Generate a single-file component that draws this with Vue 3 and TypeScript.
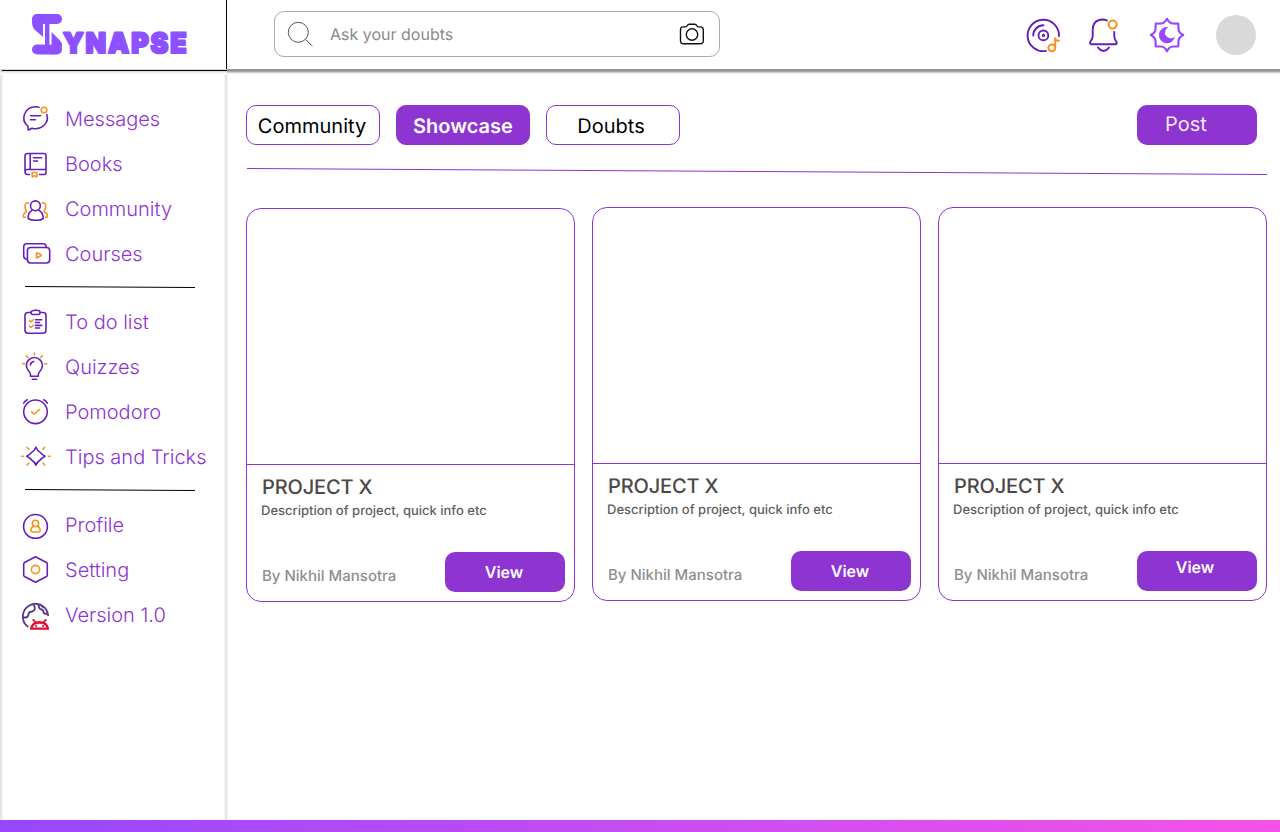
<script setup lang="ts">
interface NavItem {
  label: string
  icon: string
}

const groups: NavItem[][] = [
  [
    { label: 'Messages', icon: 'messages' },
    { label: 'Books', icon: 'books' },
    { label: 'Community', icon: 'community' },
    { label: 'Courses', icon: 'courses' },
  ],
  [
    { label: 'To do list', icon: 'todo' },
    { label: 'Quizzes', icon: 'quizzes' },
    { label: 'Pomodoro', icon: 'pomodoro' },
    { label: 'Tips and Tricks', icon: 'tips' },
  ],
  [
    { label: 'Profile', icon: 'profile' },
    { label: 'Setting', icon: 'setting' },
    { label: 'Version 1.0', icon: 'version' },
  ],
]

const tabs = ['Community', 'Showcase', 'Doubts']
const activeTab = 'Showcase'

const projects = [1, 2, 3].map((id) => ({
  id,
  title: 'PROJECT X',
  description: 'Description of project, quick info etc',
  author: 'By Nikhil Mansotra',
}))
</script>

<template>
  <div class="page">
    <header class="header">
      <div class="brand">
        <svg class="logo" width="190" height="56" viewBox="0 0 190 56">
          <g fill="#8c52ff">
            <rect x="2" y="4" width="30" height="10" rx="5" />
            <path d="M8 4H13V27L4.500 19.500Q2 17 2 12Q2 4 8 4Z" />
            <rect x="2" y="34.500" width="30" height="10" rx="5" />
            <path d="M21.500 22 29.500 30Q32 32 32 36Q31 44.500 23 44.500H21.500Z" />
            <rect x="15" y="13" width="4.500" height="23" />
          </g>
          <path d="M14 14V34.500M20.500 14V34.500" stroke="#fff" stroke-width="1.300" />
          <text class="wordmark" x="33" y="43.300" textLength="125.500" lengthAdjust="spacingAndGlyphs">YNAPSE</text>
        </svg>
      </div>
      <div class="search">
        <svg class="lens" width="28" height="28" viewBox="0 0 28 28" fill="none" stroke="#555" stroke-width="1">
          <circle cx="12.300" cy="12.300" r="10" /><path d="M19.500 19.500 26.500 26.200" />
        </svg>
        <span class="hint">Ask your doubts</span>
        <svg class="camera" width="26" height="24" viewBox="0 0 26 24" fill="none" stroke="#111" stroke-width="1.400">
          <path d="M4 4.900H6.500Q7.600 4.900 8.300 3.500Q9 2.200 10.200 2.200H15.800Q17 2.200 17.700 3.500Q18.400 4.900 19.500 4.900H21.500Q24.300 4.900 24.300 8V18.500Q24.300 21.800 21 21.800H4.500Q1.500 21.800 1.500 18.500V8Q1.500 4.900 4 4.900Z" />
          <circle cx="13" cy="12.500" r="5.700" />
        </svg>
      </div>
      <div class="actions">
        <svg class="action disc" viewBox="0 0 40 40">
          <g class="p">
            <path d="M35 21A15.700 15.700 0 1 0 22 35.900" /><circle cx="19.400" cy="20.400" r="4.900" />
            <path d="M9.200 20.500A10.300 10.300 0 0 1 19.500 10.300" /><circle cx="19.400" cy="20.400" r=".7" />
          </g>
          <g class="o"><circle cx="27.800" cy="32.800" r="3.400" /><path d="M31.200 32.800V23.300Q31.500 26 34.800 25.800" /></g>
        </svg>
        <svg class="action bell" viewBox="0 0 40 40">
          <g class="p">
            <path d="M23 5.500Q21 4.500 18.500 4.500Q8.700 5 8.700 15V21Q8.700 24 6.600 26.300Q5 29.300 8 29.300H31Q33.800 29.300 32.200 26.300Q30.300 24 30.300 21V17" />
            <path d="M14 32.500Q19.500 39.500 25 32.500" />
          </g>
          <circle class="o" cx="28.700" cy="9.600" r="4" />
        </svg>
        <svg class="action theme" viewBox="0 0 40 40">
          <path d="M20 3.800Q22.300 8.300 25.800 8.500Q28.500 8.600 31.300 8.700Q31.400 11.500 31.500 14.200Q31.700 17.700 36.200 20Q31.700 22.300 31.500 25.800Q31.400 28.500 31.300 31.300Q28.500 31.400 25.800 31.500Q22.300 31.700 20 36.200Q17.700 31.700 14.200 31.500Q11.500 31.400 8.700 31.300Q8.600 28.500 8.500 25.800Q8.300 22.300 3.800 20Q8.300 17.700 8.500 14.200Q8.600 11.500 8.700 8.700Q11.500 8.600 14.200 8.500Q17.700 8.300 20 3.800Z" fill="none" stroke="#9747ff" stroke-width="2.200" stroke-linejoin="round" />
          <path d="M21.500 12.200A8.100 8.100 0 1 0 28 21.500A5.800 5.800 0 1 1 21.500 12.200Z" fill="#9747ff" />
        </svg>
        <div class="avatar"></div>
      </div>
    </header>

    <div class="body">
      <nav class="sidebar">
        <template v-for="(group, g) in groups" :key="g">
          <svg v-if="g > 0" class="separator" width="172" height="23" viewBox="0 0 172 23">
            <line x1="1" y1="10.500" x2="171" y2="11.500" stroke="#000" />
          </svg>
          <a v-for="item in group" :key="item.label" class="nav-item">
            <svg class="nav-icon" width="32" height="30" viewBox="0 0 32 30">
              <template v-if="item.icon === 'messages'">
                <path class="p" d="M19 3.300Q17.500 2.800 15.500 2.800A11.800 11 0 0 0 7.800 22L8.300 26 12 24.200A11.800 11 0 0 0 26.800 10.500M10.500 11.700H20.500M10.500 15.700H15.300" />
                <circle class="o" cx="24" cy="6" r="2.800" />
              </template>
              <template v-else-if="item.icon === 'books'">
                <path class="p" d="M9.500 25.500H7.500Q5 25.500 5 22.500V7Q5 4.500 7.500 4.500H24Q26 4.500 26 6.500V23.500Q26 25.500 24 25.500H19.500M10.200 4.500V20.500M26 20.500H7Q5 20.500 5 22.500M13.500 8.700H21.500M13.500 12H17.500" />
                <path class="o" d="M12.200 23.500H16.800V28L14.500 26.800 12.200 28Z" />
              </template>
              <template v-else-if="item.icon === 'community'">
                <path class="o" d="M8.500 9C5.500 8 4.800 11 5 13C5.200 16 7 16.500 6.500 18C4.500 18.500 3.200 20.500 3.500 23.200H5.300M22.200 9C25.200 8 26 11 25.700 13C25.500 16 23.700 16.500 24.200 18C26.200 18.500 27.700 20.500 27.300 23.200H25.500" />
                <circle class="p" cx="15.400" cy="11.800" r="4.900" />
                <path class="p" d="M11.800 16.500Q8 18.500 8.200 24.500Q11.500 26.500 15.800 26.200Q20.500 26.500 23.200 24.500Q23.200 18.500 19 16.500" />
              </template>
              <template v-else-if="item.icon === 'courses'">
                <path class="p" d="M7.500 20.300Q3.700 20.300 3.700 16.500V7.800Q3.700 4.800 6.700 4.800H23Q26.200 4.800 26.200 8.400" />
                <rect class="p" x="7.400" y="8.500" width="22.300" height="15.500" rx="3.200" />
                <path class="o" d="M16.500 13.800V19L21 16.800Q21.200 15.700 20.500 15.300Z" />
              </template>
              <template v-else-if="item.icon === 'todo'">
                <path class="p" d="M11 5.500H8Q5 5.500 5 8.500V23Q5 26.200 8 26.200H23Q26 26.200 26 23V8.500Q26 5.500 23 5.500H20M14 3.500Q15.500 2.500 17 3.500H18.500Q20 3.500 20 5.500Q20 7.500 18 7.500H13Q11 7.500 11 5.500Q11 3.500 14 3.500ZM15.500 12.700H21.700M15.500 15.500H19.500M15.500 18.400H21.700M15.500 21H19.500" />
                <path class="o" d="M9.500 13.700 11 15 13.200 12.700M9.500 19.200 11 20.500 13.200 18.200" />
              </template>
              <template v-else-if="item.icon === 'quizzes'">
                <path class="p" d="M10.500 24.300V22.500Q10.300 20.500 8.300 18.500Q6.400 16.300 6.400 13.500A8 8 0 0 1 22.400 13.500Q22.400 16.300 20.500 18.500Q18.500 20.500 18.300 22.500V24.300ZM12.300 27.300H16.700M10.400 13Q10.700 10 13.700 9.500" />
                <path class="o" d="M14.400 1V2.800M6.300 3.700 8 5.400M22.500 3.700 20.800 5.400M2.500 11.800H4.800M24.500 11.800H26.800" />
              </template>
              <template v-else-if="item.icon === 'pomodoro'">
                <circle class="p" cx="15.500" cy="14.800" r="11.800" />
                <path class="p" d="M3.700 6.200Q5 4 7.200 2.800M27.300 6.200Q26 4 23.800 2.800" />
                <path class="o" d="M11.500 14.900 14.200 17 19.400 12.600" />
              </template>
              <template v-else-if="item.icon === 'tips'">
                <path class="p" d="M15.900 5.200C17 8 18.200 9.300 20.200 10.400Q21.500 12.200 25 14.200Q21.500 16.200 20.200 18C18.200 19.100 17 20.400 15.900 23.200C14.800 20.400 13.600 19.100 11.600 18Q10.300 16.200 6.800 14.200Q10.300 12.200 11.600 10.400C13.600 9.300 14.800 8 15.900 5.200Z" />
                <path class="o" d="M1.500 14.200H3.300M28.400 14.200H30.300M7 5.300 8.900 7.300M24.700 5.300 22.900 7.300M7 23 8.900 21M24.700 23 22.900 21" />
              </template>
              <template v-else-if="item.icon === 'profile'">
                <circle class="p" cx="15.500" cy="16.400" r="11.900" />
                <circle class="o" cx="15.500" cy="13.400" r="3.100" />
                <path class="o" d="M13.500 16Q10.800 17.500 10.900 21Q11 22 12.500 22H18.500Q20.200 22 20.200 21Q20.200 17.500 17.500 16" />
              </template>
              <template v-else-if="item.icon === 'setting'">
                <path class="p" d="M15.500 1.700 26.500 7.500Q27.300 8 27.300 9V20Q27.300 21 26.500 21.500L15.500 27.200 4.500 21.500Q3.700 21 3.700 20V9Q3.700 8 4.500 7.500Z" />
                <circle class="o" cx="15.500" cy="14.500" r="4.100" />
              </template>
              <template v-else>
                <path d="M8.200 27A12.700 12.700 0 1 1 28.200 16M3.400 17.500Q8.500 18 8.600 14Q8.700 11.800 12 11.500Q15.300 10.500 14.700 7L13.500 4M18.500 4Q18.500 9 21.500 9.500Q23.500 10 23.800 13Q25 14.300 28 13.500M20 4Q23 8 25.500 8" fill="none" stroke="#5b3a8c" stroke-width="1.900" />
                <path d="M9.800 29.700Q10.300 24.500 14.300 22.300L12 20 13.500 18.800 16 21.500Q19.500 20.700 23 21.500L25.500 18.800 27 20 24.900 22.300Q28.700 24.500 29.200 29.700Z" fill="#e0102f" />
                <path d="M12.600 27.600Q13.800 24 19.500 23.800Q25.200 24 26.400 27.600Z" fill="#fff" />
                <circle cx="16.200" cy="26" r="1.100" fill="#e0102f" /><circle cx="23" cy="26" r="1.100" fill="#e0102f" />
              </template>
            </svg>
            <span>{{ item.label }}</span>
          </a>
        </template>
      </nav>

      <main class="content">
        <div class="toolbar">
          <button v-for="tab in tabs" :key="tab" class="tab" :class="{ active: tab === activeTab }">{{ tab }}</button>
          <button class="post">Post</button>
        </div>
        <svg class="rule" width="1021" height="8" viewBox="0 0 1021 8">
          <line x1="1" y1="0.500" x2="1021" y2="6.500" stroke="#8d34d1" />
        </svg>
        <section class="cards">
          <article v-for="project in projects" :key="project.id" class="card">
            <div class="preview"></div>
            <div class="details">
              <h2>{{ project.title }}</h2>
              <p>{{ project.description }}</p>
              <div class="footer">
                <span class="author">{{ project.author }}</span>
                <button class="view">View</button>
              </div>
            </div>
          </article>
        </section>
      </main>
    </div>
    <div class="bottom-bar"></div>
  </div>
</template>

<style>
body {
  margin: 0;
}
</style>

<style scoped>
.page {
  width: 1280px;
  height: 832px;
  display: flex;
  flex-direction: column;
  overflow: hidden;
  background: #fff;
  font-family: Inter, 'Liberation Sans', sans-serif;
  text-rendering: geometricPrecision;
}
.page * {
  box-sizing: border-box;
}
button {
  font-family: inherit;
  text-rendering: inherit;
  padding: 0;
  border: 0;
  display: flex;
  align-items: center;
  justify-content: center;
}
.header {
  position: relative;
  height: 69px;
  flex: none;
  display: flex;
  box-shadow: 0 2px 0 #929292, 0 3px 0 #a8a8a8, 0 4px 0 #d0d0d0, 0 5px 0 #eee;
  background: #fff;
}
.brand {
  width: 227px;
  height: 71px;
  padding: 10px 0 0 30px;
  background: linear-gradient(#000, #000) 2px 70px / 225px 1px no-repeat, linear-gradient(#000, #000) 226px 0 / 1px 69px no-repeat, linear-gradient(#fff, #fff) 0 0 / 226px 69px no-repeat, #d9d5d9;
  box-shadow: 0 1px 0 #ddd, 0 2px 0 #eee, 0 4px 0 #fafafa;
}
.logo {
  display: block;
}
.wordmark {
  font-family: Inter, sans-serif;
  font-size: 28px;
  font-weight: 900;
  letter-spacing: 2px;
  fill: #8c52ff;
  stroke: #8c52ff;
  stroke-width: 2.2px;
  stroke-linejoin: round;
}
.search {
  width: 446px;
  height: 46px;
  margin: 11px 0 0 47px;
  padding: 0 14px 0 12px;
  border: 1px solid #aaa;
  border-radius: 10px;
  display: flex;
  align-items: center;
}
.lens {
  margin: 0 0 0 -1px;
}
.hint {
  flex: 1;
  margin-left: 16px;
  font-size: 16px;
  color: #8a8a8a;
}
.actions {
  margin-left: auto;
  padding: 15px 24px 0 0;
  display: flex;
}
.action {
  width: 40px;
  height: 40px;
}
.bell {
  margin-left: 20px;
}
.theme {
  margin-left: 23px;
}
.avatar {
  width: 40px;
  height: 40px;
  margin-left: 29px;
  border-radius: 50%;
  background: #d9d9d9;
}
.p,
.o {
  fill: none;
  stroke: #6420b5;
  stroke-width: 1.6;
  stroke-linecap: round;
  stroke-linejoin: round;
}
.o {
  stroke: #f7931e;
  stroke-width: 1.6;
}
.action .p {
  stroke-width: 1.9;
}
.action .o {
  stroke-width: 2;
}
.body {
  flex: 1;
  min-height: 0;
  display: flex;
}
.sidebar {
  width: 228px;
  padding: 27px 0 0 20px;
  background: linear-gradient(90deg, #e6e6e6 2px, #f5f5f5 2px 3px, transparent 3px 224px, #f5f5f5 224px 225px, #e6e6e6 225px 227px, #f3f3f3 227px);
}
.nav-item {
  height: 45px;
  display: flex;
  align-items: center;
  gap: 13px;
  font-size: 20px;
  font-weight: 350;
  color: #8d34d1;
  white-space: nowrap;
}
.nav-icon {
  flex: none;
}
.separator {
  display: block;
  margin-left: 4px;
}
.content {
  width: 1021px;
  margin-left: 18px;
}
.toolbar {
  margin-top: 36px;
  display: flex;
  gap: 16px;
}
.tab {
  width: 134px;
  height: 40px;
  border: 1px solid #8d34d1;
  border-radius: 10px;
  background: #fff;
  font-size: 20px;
  font-weight: 400;
  color: #000;
  padding: 1px 0 0;
}
.tab:nth-child(1) {
  padding-right: 2px;
}
.tab:nth-child(3) {
  padding-right: 4px;
}
.tab.active {
  background: #8d34d1;
  color: #fff;
  font-weight: 600;
}
.post {
  width: 120px;
  height: 40px;
  margin: 0 10px 0 auto;
  padding: 0 22px 2px 0;
  border-radius: 10px;
  background: #8d34d1;
  color: #f4eafa;
  font-size: 20px;
}
.rule {
  display: block;
  margin-top: 23px;
}
.cards {
  margin-top: 31px;
  display: flex;
  gap: 17px;
}
.card {
  width: 329px;
  height: 394px;
  border: 1px solid #8d34d1;
  border-radius: 15px;
}
.card:first-child {
  margin-top: 1px;
}
.preview {
  height: 256px;
  border-bottom: 1px solid #8d34d1;
}
.details {
  padding: 10px 9px 0 14px;
}
h2 {
  margin: 0 0 0 1px;
  font-size: 20px;
  line-height: 24px;
  font-weight: 500;
  letter-spacing: -0.15px;
  color: #4d4848;
}
p {
  margin: 4px 0 0;
  font-size: 13px;
  font-weight: 500;
  line-height: 16px;
  color: #5f5f5f;
}
.footer {
  margin-top: 33px;
  display: flex;
  justify-content: space-between;
  align-items: center;
}
.author {
  margin: 7px 0 0 1px;
  font-size: 15px;
  font-weight: 500;
  color: #8f8f8f;
}
.view {
  width: 120px;
  height: 40px;
  padding-right: 2px;
  border-radius: 10px;
  background: #8d34d1;
  color: #fff;
  font-size: 16px;
  font-weight: 600;
}
.card:last-child .view {
  padding: 0 4px 8px 0;
}
.bottom-bar {
  height: 12px;
  flex: none;
  background: linear-gradient(90deg, #9747ff, #f552e7);
}
</style>
